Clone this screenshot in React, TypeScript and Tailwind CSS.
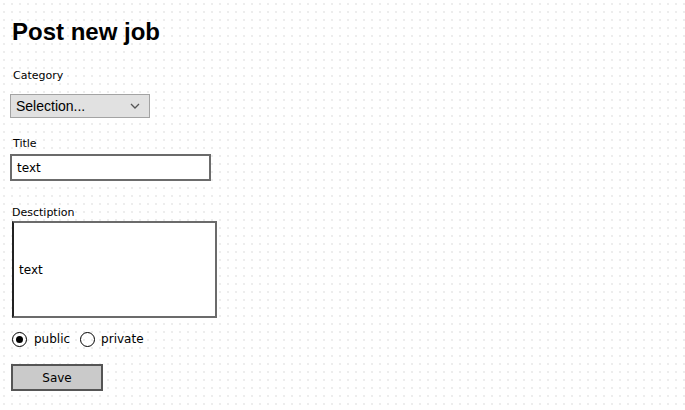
const sketch = "font-['Comic_Sans_MS','DejaVu_Sans',sans-serif]"

export default function App() {
  return (
    <div className="w-[685px] h-[410px] bg-white bg-[radial-gradient(circle,#ececec_0.7px,transparent_0.8px)] bg-[length:8px_8px] bg-[position:0px_0px] overflow-hidden">
      <div className="flex flex-col pl-[10px] pt-[16px]">
        {/* Heading */}
        <h1 className="ml-[2px] text-[24px] leading-[31px] font-bold text-black font-['Liberation_Sans',Arial,sans-serif]">
          Post new job
        </h1>

        {/* Category */}
        <label className={`${sketch} ml-[3px] mt-[22px] text-[11px] leading-[14px] text-black`}>Category</label>
        <div className="mt-[11px] w-[140px] h-[24px] bg-[#e1e1e1] border border-[#a3a3a3] flex items-center justify-between pl-[5px] pr-[9px]">
          <span className="text-[14px] text-black font-['Liberation_Sans',Arial,sans-serif]">Selection...</span>
          <svg width="10" height="6" viewBox="0 0 10 6" fill="none">
            <path d="M1 1 L5 5 L9 1" stroke="#555" strokeWidth="1.3" />
          </svg>
        </div>

        {/* Title */}
        <label className={`${sketch} ml-[3px] mt-[19px] text-[11px] leading-[14px] text-black`}>Title</label>
        <div className="mt-[3px] w-[201px] h-[27px] bg-white border-2 border-[#6b6b6b] flex items-center pl-[5px]">
          <span className={`${sketch} text-[12px] text-black`}>text</span>
        </div>

        {/* Description */}
        <label className={`${sketch} ml-[2px] mt-[25px] text-[11px] leading-[14px] text-black`}>Desctiption</label>
        <div className="ml-[2px] mt-[1px] w-[205px] h-[97px] bg-white border-2 border-[#6b6b6b] border-l-[#222] flex items-center pl-[5px]">
          <span className={`${sketch} text-[12px] text-black`}>text</span>
        </div>

        {/* Visibility */}
        <div className="mt-[13px] ml-[2px] flex items-center h-[16px]">
          <div className="w-[15px] h-[15px] rounded-full border-[1.5px] border-black flex items-center justify-center">
            <div className="w-[7px] h-[7px] rounded-full bg-black" />
          </div>
          <span className={`${sketch} ml-[7px] text-[12px] text-black`}>public</span>
          <div className="ml-[10px] w-[15px] h-[15px] rounded-full border-[1.5px] border-black" />
          <span className={`${sketch} ml-[6px] text-[12px] text-black`}>private</span>
        </div>

        {/* Save */}
        <button className={`${sketch} mt-[17px] ml-[1px] w-[92px] h-[27px] bg-[#cacaca] border-2 border-[#555] text-[12px] text-black`}>
          Save
        </button>
      </div>
    </div>
  )
}
